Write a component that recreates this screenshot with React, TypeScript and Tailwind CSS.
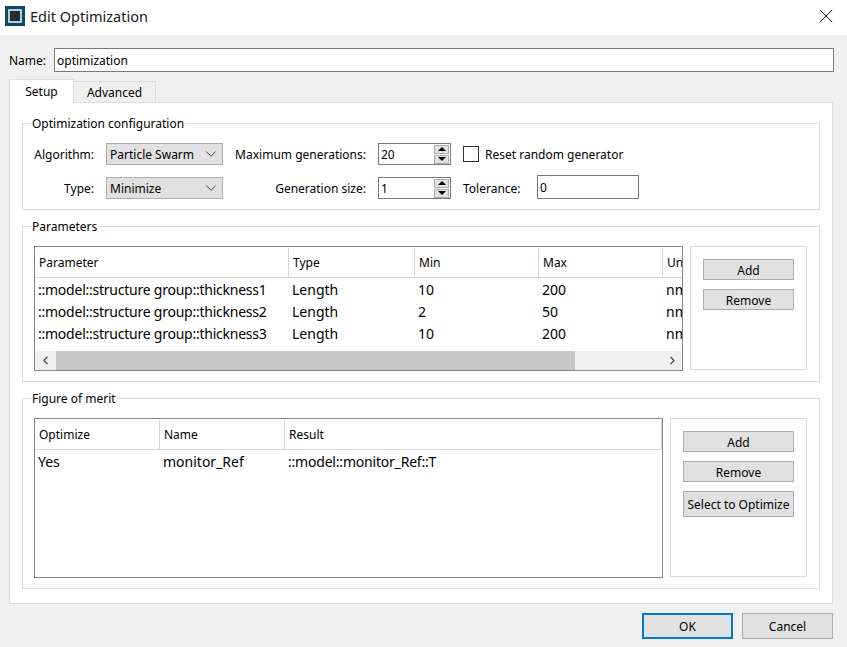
import { ChevronDown, ChevronLeft, ChevronRight, X } from 'lucide-react'
import type { ReactNode } from 'react'

function Btn({ children, className = 'h-[21px] pt-[2px]' }: { children: ReactNode; className?: string }) {
  return (
    <button className={`flex w-full items-center justify-center border border-[#adadad] bg-[#e1e1e1] text-[12px] text-black ${className}`}>
      {children}
    </button>
  )
}

function Group({ title, className, children }: { title: string; className: string; children: ReactNode }) {
  return (
    <div className={`relative border border-[#dcdcdc] ${className}`}>
      <span className="absolute -top-[9px] left-[8px] bg-white px-px text-[12px] leading-[18px] text-black">{title}</span>
      {children}
    </div>
  )
}

function Combo({ value }: { value: string }) {
  return (
    <div className="flex h-[22px] items-center justify-between border border-[#adadad] bg-[#e1e1e1] pl-[3px] pr-[2px] text-[12px]">
      <span className="pt-px">{value}</span>
      <ChevronDown size={18} strokeWidth={1.2} color="#333" />
    </div>
  )
}

function Spin({ value }: { value: string }) {
  return (
    <div className="flex h-[22px] items-center justify-between border border-[#7a7a7a] bg-white pl-[2px] pr-[1px] text-[12px]">
      <span className="pt-px">{value}</span>
      <div className="flex flex-col gap-px">
        <div className="flex h-[9px] w-[15px] items-center justify-center border border-[#adadad] bg-[#e1e1e1]">
          <div className="h-0 w-0 border-x-[4px] border-b-[4px] border-x-transparent border-b-black" />
        </div>
        <div className="flex h-[9px] w-[15px] items-center justify-center border border-[#adadad] bg-[#e1e1e1]">
          <div className="h-0 w-0 border-x-[4px] border-t-[4px] border-x-transparent border-t-black" />
        </div>
      </div>
    </div>
  )
}

const paramRows = [
  ['::model::structure group::thickness1', 'Length', '10', '200', 'nm'],
  ['::model::structure group::thickness2', 'Length', '2', '50', 'nm'],
  ['::model::structure group::thickness3', 'Length', '10', '200', 'nm'],
]

export default function App() {
  return (
    <div className="flex h-[647px] w-[847px] flex-col overflow-hidden bg-[#f0f0f0] font-['Noto_Sans',sans-serif] text-black">
      <div className="flex h-[35px] items-center justify-between bg-white pb-[3px] pl-[5px] pr-[9px]">
        <div className="flex items-center gap-[5px]">
          <svg width="20" height="20" viewBox="0 0 20 20">
            <rect width="20" height="20" fill="#0b4a6b" />
            <rect x="4" y="4" width="12" height="12" fill="#1c2d3a" stroke="#e8eef2" strokeWidth="1.6" />
          </svg>
          <span className="text-[14.5px] leading-none text-[#1a1a1a]">Edit Optimization</span>
        </div>
        <X size={24} strokeWidth={0.9} color="#000" />
      </div>

      <div className="flex h-[43px] items-start pl-[9px] pr-[13px] pt-[13px]">
        <span className="w-[45px] pt-px text-[12px] leading-[24px]">Name:</span>
        <div className="flex h-[24px] flex-1 items-center border border-[#7a7a7a] bg-white pl-[2px] pt-px text-[12px]">optimization</div>
      </div>

      <div className="ml-[9px] flex h-[24px] items-end">
        <div className="z-10 -mb-px flex h-[24px] w-[65px] items-center justify-center border border-b-0 border-[#dcdcdc] bg-white text-[12px]">Setup</div>
        <div className="-mb-px flex h-[22px] w-[82px] items-center justify-center border border-l-0 border-[#dcdcdc] bg-[#f0f0f0] pt-px text-[12px]">Advanced</div>
      </div>

      <div className="ml-[9px] h-[502px] w-[824px] border border-[#dcdcdc] bg-white px-[12px] pt-[20px]">
        <Group title="Optimization configuration" className="h-[87px]">
          <div className="grid grid-cols-[71px_117px_131px_73px_176px] gap-x-[12px] gap-y-[12px] pt-[19px] text-[12px] leading-[24px]">
            <span className="h-[22px] text-right">Algorithm:</span>
            <Combo value="Particle Swarm" />
            <span className="h-[22px] text-right">Maximum generations:</span>
            <Spin value="20" />
            <label className="flex h-[22px] items-center gap-[6px]">
              <span className="h-[16px] w-[16px] border border-[#333] bg-white" />
              <span className="pt-px">Reset random generator</span>
            </label>
            <span className="h-[22px] text-right">Type:</span>
            <Combo value="Minimize" />
            <span className="h-[22px] text-right">Generation size:</span>
            <Spin value="1" />
            <div className="flex h-[22px] items-center gap-[12px]">
              <span className="w-[62px] shrink-0 pt-px">Tolerance:</span>
              <div className="-mt-[2px] flex h-[24px] w-[102px] shrink-0 items-center border border-[#7a7a7a] bg-white pl-[2px] pt-px">0</div>
            </div>
          </div>
        </Group>

        <Group title="Parameters" className="mt-[16px] h-[156px]">
          <div className="flex gap-[7px] pl-[11px] pt-[19px]">
            <div className="h-[125px] w-[649px] overflow-hidden border border-[#828790] bg-white">
              <div className="flex h-[31px] w-[700px] border-b border-[#d5d5d5] pt-px text-[12px] leading-[29px]">
                <div className="w-[254px] border-r border-[#d5d5d5] pl-[4px]">Parameter</div>
                <div className="w-[126px] border-r border-[#d5d5d5] pl-[4px]">Type</div>
                <div className="w-[124px] border-r border-[#d5d5d5] pl-[4px]">Min</div>
                <div className="w-[124px] border-r border-[#d5d5d5] pl-[4px]">Max</div>
                <div className="pl-[4px]">Unit</div>
              </div>
              <div className="h-[73px] w-[700px] pt-px text-[14px] leading-[22px]">
                {paramRows.map((row) => (
                  <div key={row[0]} className="flex h-[22px]">
                    <div className="w-[254px] whitespace-nowrap pl-[3px] tracking-[-0.24px]">{row[0]}</div>
                    <div className="w-[126px] pl-[3px]">{row[1]}</div>
                    <div className="w-[124px] pl-[3px]">{row[2]}</div>
                    <div className="w-[124px] pl-[3px]">{row[3]}</div>
                    <div className="pl-[3px]">{row[4]}</div>
                  </div>
                ))}
              </div>
              <div className="flex h-[19px] items-center bg-[#f0f0f0]">
                <div className="flex w-[21px] justify-center">
                  <ChevronLeft size={13} strokeWidth={2.6} color="#555" />
                </div>
                <div className="h-full w-[519px] bg-[#c8c8c8]" />
                <div className="flex flex-1 justify-end pr-[3px]">
                  <ChevronRight size={13} strokeWidth={2.6} color="#555" />
                </div>
              </div>
            </div>
            <div className="flex h-[124px] w-[117px] flex-col gap-[9px] border border-[#dcdcdc] px-[12px] pt-[12px]">
              <Btn>Add</Btn>
              <Btn>Remove</Btn>
            </div>
          </div>
        </Group>

        <Group title="Figure of merit" className="mt-[16px] h-[191px]">
          <div className="flex gap-[7px] pl-[11px] pt-[19px]">
            <div className="h-[160px] w-[629px] border border-[#828790] bg-white">
              <div className="flex h-[31px] border-b border-[#d5d5d5] pt-px text-[12px] leading-[29px]">
                <div className="w-[125px] border-r border-[#d5d5d5] pl-[4px]">Optimize</div>
                <div className="w-[125px] border-r border-[#d5d5d5] pl-[4px]">Name</div>
                <div className="flex-1 border-r border-[#d5d5d5] pl-[4px]">Result</div>
              </div>
              <div className="flex h-[22px] pt-px text-[14px] leading-[22px]">
                <div className="w-[125px] pl-[3px]">Yes</div>
                <div className="w-[125px] pl-[3px]">monitor_Ref</div>
                <div className="pl-[3px] tracking-[-0.2px]">::model::monitor_Ref::T</div>
              </div>
            </div>
            <div className="flex h-[159px] w-[137px] flex-col gap-[9px] border border-[#dcdcdc] px-[12px] pt-[12px]">
              <Btn>Add</Btn>
              <Btn>Remove</Btn>
              <Btn className="h-[26px] pt-px">Select to Optimize</Btn>
            </div>
          </div>
        </Group>
      </div>

      <div className="flex justify-end gap-[9px] pr-[14px] pt-[9px]">
        <Btn className="h-[26px] !w-[91px] border-2 !border-[#0078d7] pt-px">OK</Btn>
        <Btn className="h-[26px] !w-[91px] pt-px">Cancel</Btn>
      </div>
    </div>
  )
}
